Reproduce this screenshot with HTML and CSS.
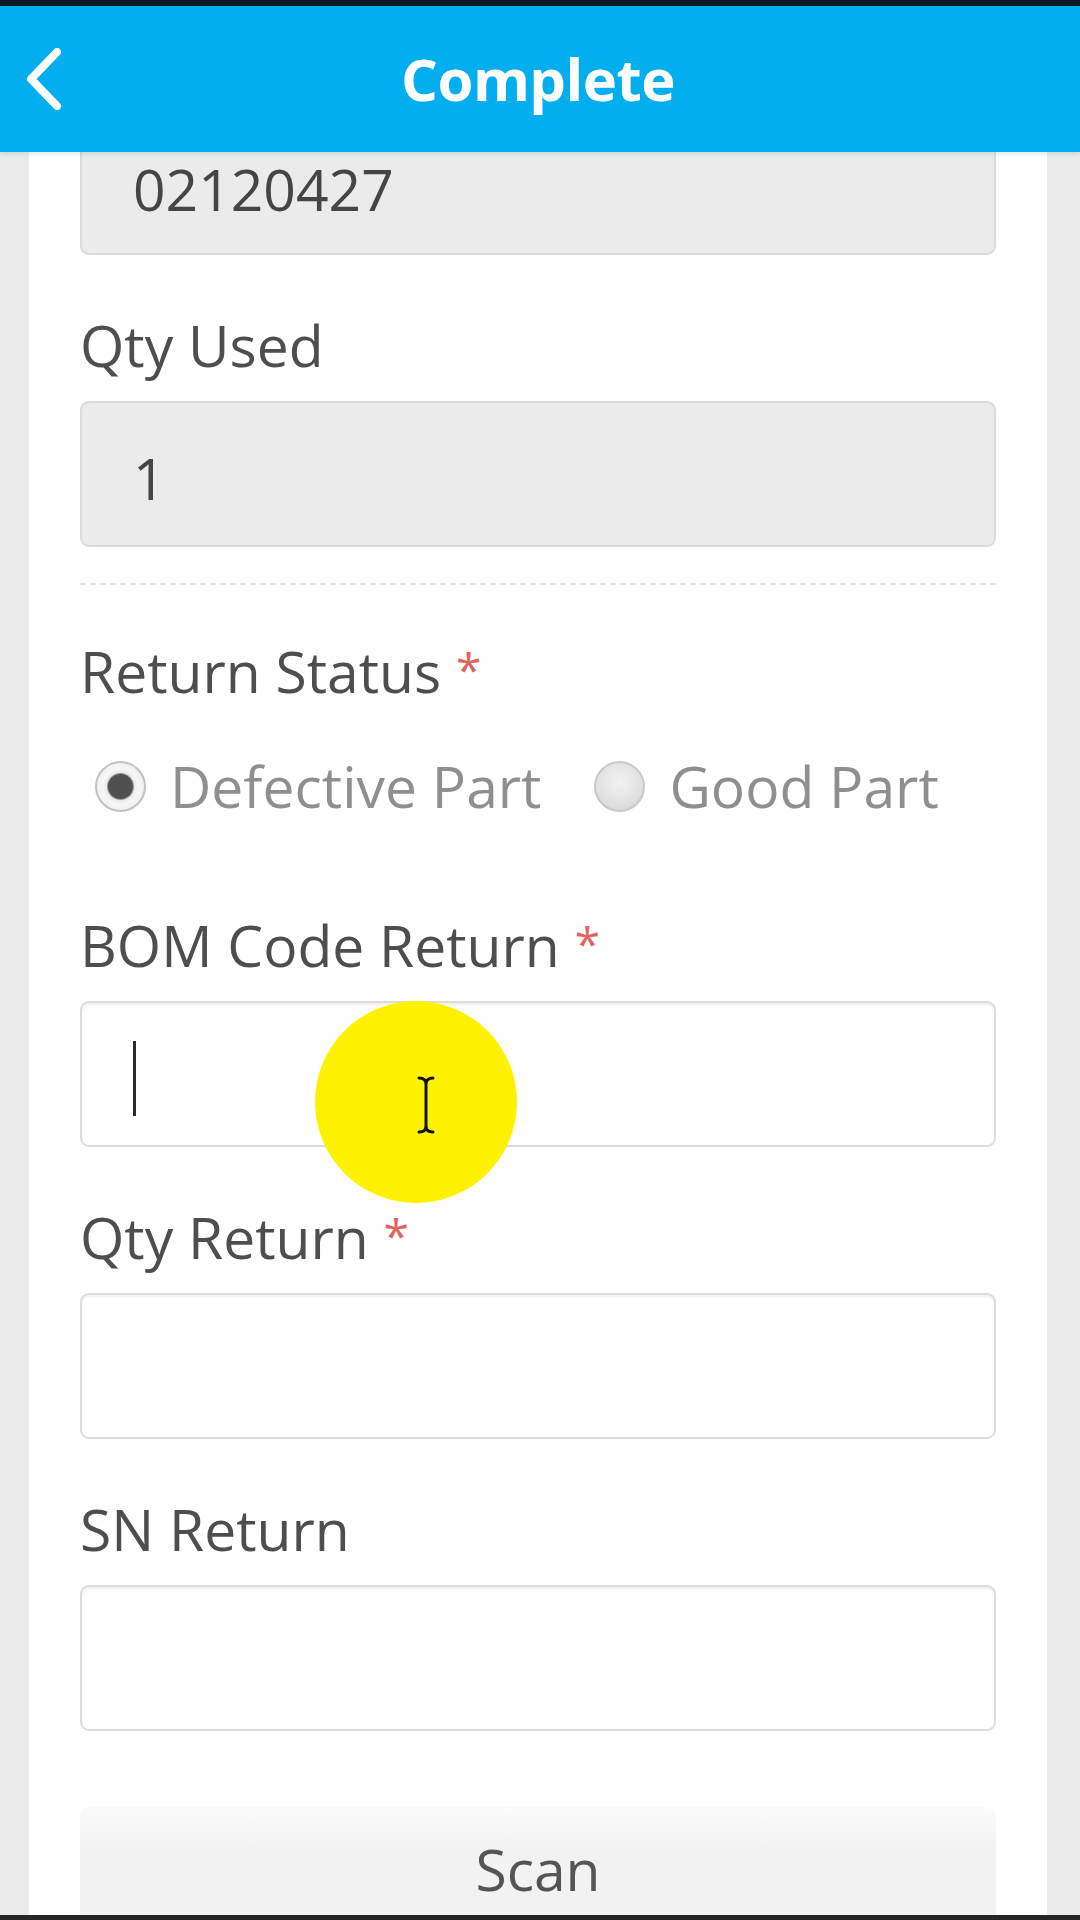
FILE: index.html
```html
<!DOCTYPE html>
<html lang="en">
<head>
<meta charset="utf-8">
<title>Complete</title>
<link rel="stylesheet" href="styles.css">
</head>
<body>
<div class="screen">
  <header class="topbar">
    <button class="back" aria-label="Back">
      <svg width="40" height="62" viewBox="0 0 40 62" aria-hidden="true">
        <polyline points="33,4 7,31 33,58" fill="none" stroke="#ffffff" stroke-width="8" stroke-linecap="round" stroke-linejoin="round"/>
      </svg>
    </button>
    <h1 class="title">Complete</h1>
  </header>

  <main class="viewport">
    <div class="sheet">
      <form class="form">
        <div class="field field-first">
          <div class="box box-readonly box-scrolled"><span class="value">02120427</span></div>
        </div>

        <div class="field">
          <div class="label">Qty Used</div>
          <div class="box box-readonly"><span class="value">1</span></div>
        </div>

        <div class="divider"></div>

        <div class="field field-after-divider">
          <div class="label">Return Status <span class="req">*</span></div>
          <div class="radios">
            <span class="radio-option">
              <span class="radio radio-checked"></span>
              <span class="radio-text">Defective Part</span>
            </span>
            <span class="radio-option">
              <span class="radio"></span>
              <span class="radio-text">Good Part</span>
            </span>
          </div>
        </div>

        <div class="field field-after-radios">
          <div class="label">BOM Code Return <span class="req">*</span></div>
          <div class="box box-input"><span class="caret"></span></div>
        </div>

        <div class="field">
          <div class="label">Qty Return <span class="req">*</span></div>
          <div class="box box-input"></div>
        </div>

        <div class="field">
          <div class="label">SN Return</div>
          <div class="box box-input"></div>
        </div>

        <button type="button" class="scan">Scan</button>
      </form>
    </div>
  </main>

  <div class="bottom-strip"></div>

  <div class="tap-indicator" aria-hidden="true">
    <svg width="22" height="60" viewBox="0 0 22 60">
      <path d="M4 3 Q11 3 11 9 Q11 3 18 3 M11 9 V51 M4 57 Q11 57 11 51 Q11 57 18 57" fill="none" stroke="#111111" stroke-width="3" stroke-linecap="round"/>
    </svg>
  </div>
</div>
</body>
</html>
```

FILE: styles.css
```css
* {
  box-sizing: border-box;
}

html, body {
  margin: 0;
  padding: 0;
}

body {
  width: 1080px;
  height: 1920px;
  overflow: hidden;
  font-family: "Open Sans", "Liberation Sans", sans-serif;
  background: #ffffff;
}

.screen {
  position: relative;
  width: 1080px;
  height: 1920px;
  display: flex;
  flex-direction: column;
  overflow: hidden;
}

/* ---------- header ---------- */
.topbar {
  position: relative;
  z-index: 2;
  flex: 0 0 152px;
  height: 152px;
  border-top: 6px solid #0c1823;
  background: #03aeef;
  display: flex;
  align-items: center;
  justify-content: center;
  box-shadow: 0 3px 3px rgba(120, 150, 170, 0.18);
}

.back {
  position: absolute;
  left: 24px;
  top: 42px;
  width: 40px;
  height: 62px;
  padding: 0;
  margin: 0;
  border: 0;
  background: transparent;
  display: flex;
}

.title {
  margin: 0;
  color: #ffffff;
  font-size: 58px;
  font-weight: 700;
  line-height: 82px;
  letter-spacing: -0.5px;
  transform: translateX(-2px);
}

/* ---------- scroll area ---------- */
.viewport {
  flex: 1 1 auto;
  min-height: 0;
  background: #ebebeb;
  padding: 0 33px 0 29px;
  overflow: hidden;
}

.sheet {
  height: 100%;
  background: #ffffff;
  padding: 0 51px;
  overflow: hidden;
}

.form {
  display: flex;
  flex-direction: column;
  margin: 0;
}

.field {
  display: flex;
  flex-direction: column;
  margin-top: 50px;
}

.field-first {
  margin-top: 0;
}

.field-after-divider {
  margin-top: 46px;
}

.field-after-radios {
  margin-top: 79px;
}

.label {
  font-size: 57px;
  line-height: 80px;
  height: 80px;
  color: #4e4e4e;
  margin-bottom: 16px;
  white-space: nowrap;
}

.req {
  color: #e2625e;
  font-size: 46px;
  line-height: 0;
  vertical-align: 6px;
}

.box {
  height: 146px;
  border-radius: 9px;
  display: flex;
  align-items: center;
  padding-left: 51px;
}

.box-readonly {
  background: #ebebeb;
  border: 2px solid #dadada;
}

.box-scrolled {
  height: 103px;
  border-top: 0;
  border-radius: 0 0 9px 9px;
  padding-bottom: 35px;
}

.box-input {
  background: #ffffff;
  border: 2px solid #dcdcdc;
  box-shadow: inset 0 2px 2px rgba(0, 0, 0, 0.06);
}

.value {
  font-size: 57px;
  line-height: 44px;
  color: #454545;
  transform: translateY(4px);
}

.caret {
  width: 3px;
  height: 75px;
  background: #2a2a2a;
  transform: translateY(4px);
}

.divider {
  margin-top: 36px;
  height: 0;
  border-top: 2px dashed #e2e2e2;
}

/* ---------- radios ---------- */
.radios {
  display: flex;
  align-items: center;
  height: 80px;
  margin-top: 19px;
  padding-left: 15px;
}

.radio-option {
  display: inline-flex;
  align-items: center;
  margin-right: 53px;
}

.radio {
  width: 51px;
  height: 51px;
  border-radius: 50%;
  border: 2px solid #c9c9c9;
  background: radial-gradient(circle at 50% 40%, #f2f2f2 0%, #dcdcdc 75%, #d2d2d2 100%);
  margin-right: 24px;
}

.radio-checked {
  border-color: #c2c2c2;
  background: radial-gradient(circle, #505050 0, #505050 12px, #eaeaea 14px, #f7f7f7 18px, #e6e6e6 100%);
}

.radio-text {
  font-size: 57px;
  line-height: 80px;
  color: #8f8f8f;
  white-space: nowrap;
}

/* ---------- scan ---------- */
.scan {
  margin-top: 76px;
  height: 108px;
  border: 0;
  border-radius: 10px 10px 0 0;
  background: linear-gradient(#fbfbfb, #f2f2f2 40%, #f3f3f3);
  font-family: "Open Sans", "Liberation Sans", sans-serif;
  font-size: 57px;
  line-height: 80px;
  color: #555555;
  padding: 22px 0 0;
  display: flex;
  justify-content: center;
  align-items: flex-start;
}

.bottom-strip {
  flex: 0 0 5px;
  background: #262626;
}

/* ---------- touch indicator overlay ---------- */
.tap-indicator {
  position: absolute;
  left: 315px;
  top: 1001px;
  width: 202px;
  height: 202px;
  border-radius: 50%;
  background: #fff200;
  display: flex;
  align-items: center;
  justify-content: center;
  padding: 6px 0 0 20px;
  z-index: 3;
}
```
